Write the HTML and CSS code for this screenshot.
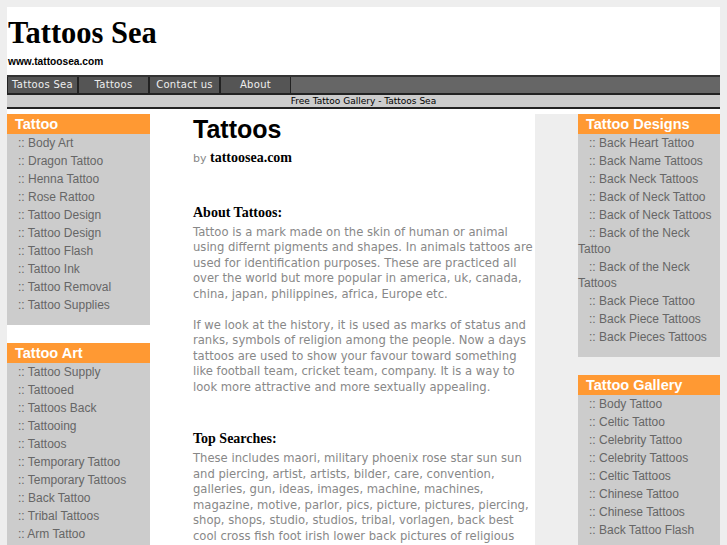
FILE: index.html
```html
<!DOCTYPE html>
<html lang="en">
<head>
    <meta charset="UTF-8">
    <title>Tattoos Sea - Free Tattoo Gallery</title>
    <link rel="stylesheet" href="styles.css">
</head>
<body>
    <div class="wrapper">
        <!-- Header -->
        <div class="header">
            <h1 class="site-title">Tattoos Sea</h1>
            <p class="site-url">www.tattoosea.com</p>
        </div>

        <!-- Navigation -->
        <ul class="nav">
            <li><a href="#">Tattoos Sea</a></li>
            <li><a href="#">Tattoos</a></li>
            <li><a href="#">Contact us</a></li>
            <li><a href="#">About</a></li>
        </ul>
        <div class="subbar">Free Tattoo Gallery - Tattoos Sea</div>

        <div class="columns">
            <!-- Left sidebar -->
            <div class="sidebar left">
                <div class="box">
                    <h2>Tattoo</h2>
                    <ul>
                        <li><a href="#">:: Body Art</a></li>
                        <li><a href="#">:: Dragon Tattoo</a></li>
                        <li><a href="#">:: Henna Tattoo</a></li>
                        <li><a href="#">:: Rose Rattoo</a></li>
                        <li><a href="#">:: Tattoo Design</a></li>
                        <li><a href="#">:: Tattoo Design</a></li>
                        <li><a href="#">:: Tattoo Flash</a></li>
                        <li><a href="#">:: Tattoo Ink</a></li>
                        <li><a href="#">:: Tattoo Removal</a></li>
                        <li><a href="#">:: Tattoo Supplies</a></li>
                    </ul>
                </div>
                <div class="box">
                    <h2>Tattoo Art</h2>
                    <ul>
                        <li><a href="#">:: Tattoo Supply</a></li>
                        <li><a href="#">:: Tattooed</a></li>
                        <li><a href="#">:: Tattoos Back</a></li>
                        <li><a href="#">:: Tattooing</a></li>
                        <li><a href="#">:: Tattoos</a></li>
                        <li><a href="#">:: Temporary Tattoo</a></li>
                        <li><a href="#">:: Temporary Tattoos</a></li>
                        <li><a href="#">:: Back Tattoo</a></li>
                        <li><a href="#">:: Tribal Tattoos</a></li>
                        <li><a href="#">:: Arm Tattoo</a></li>
                    </ul>
                </div>
            </div>

            <!-- Main content -->
            <div class="content">
                <h1>Tattoos</h1>
                <p class="byline">by <strong>tattoosea.com</strong></p>

                <h3>About Tattoos:</h3>
                <p>Tattoo is a mark made on the skin of human or animal using differnt pigments and shapes. In animals tattoos are used for identification purposes. These are practiced all over the world but more popular in america, uk, canada, china, japan, philippines, africa, Europe etc.</p>
                <p>If we look at the history, it is used as marks of status and ranks, symbols of religion among the people. Now a days tattoos are used to show your favour toward something like football team, cricket team, company. It is a way to look more attractive and more sextually appealing.</p>

                <h3>Top Searches:</h3>
                <p>These includes maori, military phoenix rose star sun sun and piercing, artist, artists, bilder, care, convention, galleries, gun, ideas, images, machine, machines, magazine, motive, parlor, pics, picture, pictures, piercing, shop, shops, studio, studios, tribal, vorlagen, back best cool cross fish foot irish lower back pictures of religious</p>
            </div>

            <!-- Right sidebar -->
            <div class="sidebar right">
                <div class="box">
                    <h2>Tattoo Designs</h2>
                    <ul>
                        <li><a href="#">:: Back Heart Tattoo</a></li>
                        <li><a href="#">:: Back Name Tattoos</a></li>
                        <li><a href="#">:: Back Neck Tattoos</a></li>
                        <li><a href="#">:: Back of Neck Tattoo</a></li>
                        <li><a href="#">:: Back of Neck Tattoos</a></li>
                        <li><a href="#">:: Back of the Neck Tattoo</a></li>
                        <li><a href="#">:: Back of the Neck Tattoos</a></li>
                        <li><a href="#">:: Back Piece Tattoo</a></li>
                        <li><a href="#">:: Back Piece Tattoos</a></li>
                        <li><a href="#">:: Back Pieces Tattoos</a></li>
                    </ul>
                </div>
                <div class="box">
                    <h2>Tattoo Gallery</h2>
                    <ul>
                        <li><a href="#">:: Body Tattoo</a></li>
                        <li><a href="#">:: Celtic Tattoo</a></li>
                        <li><a href="#">:: Celebrity Tattoo</a></li>
                        <li><a href="#">:: Celebrity Tattoos</a></li>
                        <li><a href="#">:: Celtic Tattoos</a></li>
                        <li><a href="#">:: Chinese Tattoo</a></li>
                        <li><a href="#">:: Chinese Tattoos</a></li>
                        <li><a href="#">:: Back Tattoo Flash</a></li>
                    </ul>
                </div>
            </div>
        </div>
    </div>
</body>
</html>
```

FILE: styles.css
```css
/* Global */
body {
    margin: 0;
    padding: 7px 7px 0 7px;
    background: #eeeeee;
    font-family: 'DejaVu Sans', Verdana, sans-serif;
    font-size: 11.6px;
    color: #888888;
}

a {
    text-decoration: none;
}

.wrapper {
    width: 713px;
    background: #ffffff;
}

/* Header */
.header {
    padding: 11px 0 7px 1px;
}

.site-title {
    margin: 0;
    font-family: 'Liberation Serif', 'Times New Roman', serif;
    font-size: 30.5px;
    font-weight: bold;
    line-height: 31px;
    color: #000000;
}

.site-url {
    margin: 7px 0 0;
    font-family: 'Liberation Sans', Arial, sans-serif;
    font-size: 10.2px;
    font-weight: bold;
    line-height: 12px;
    color: #000000;
}

/* Navigation */
.nav {
    list-style: none;
    margin: 0;
    padding: 0;
    display: flex;
    background: #666666;
    border-top: 2px solid #333333;
    border-bottom: 2px solid #222222;
}

.nav li {
    width: 69px;
    border-left: 1px solid #222222;
    border-right: 1px solid #222222;
    background: #555555;
    text-align: center;
}

.nav a {
    display: block;
    line-height: 16px;
    font-size: 10px;
    letter-spacing: 0.3px;
    color: #eeeeee;
}

.subbar {
    background: #cccccc;
    border-bottom: 2px solid #222222;
    text-align: center;
    font-size: 9px;
    line-height: 12px;
    color: #000000;
}

/* Three columns */
.columns {
    display: flex;
    align-items: stretch;
    margin-top: 5px;
}

.sidebar.left {
    width: 143px;
}

.sidebar.right {
    width: 142px;
    padding-left: 43px;
    background: #eeeeee;
}

.content {
    width: 342px;
    padding-left: 43px;
}

/* Sidebar boxes */
.box {
    background: #cccccc;
    padding-bottom: 11px;
    margin-bottom: 18px;
}

.box h2 {
    margin: 0;
    padding-left: 8px;
    background: #ff9933;
    font-family: 'Liberation Sans', Arial, sans-serif;
    font-size: 14.5px;
    font-weight: bold;
    line-height: 20px;
    color: #ffffff;
}

.box ul {
    list-style: none;
    margin: 0;
    padding: 0;
}

.box li {
    padding: 1px 0;
    text-indent: 11px;
    font-family: 'Liberation Sans', Arial, sans-serif;
    font-size: 12px;
    line-height: 16px;
}

.box a {
    color: #666666;
}

/* Main content */
.content h1 {
    margin: 1px 0 0;
    font-family: 'Liberation Sans', Arial, sans-serif;
    font-size: 25px;
    font-weight: bold;
    line-height: 28px;
    color: #000000;
}

.byline {
    margin: 7px 0 38px;
    font-size: 11px;
    line-height: 16px;
}

.byline strong {
    font-family: 'Liberation Serif', 'Times New Roman', serif;
    font-size: 14px;
    color: #000000;
}

.content h3 {
    margin: 36px 0 4px;
    font-family: 'Liberation Serif', 'Times New Roman', serif;
    font-size: 14px;
    font-weight: bold;
    line-height: 16px;
    color: #000000;
}

.byline + h3 {
    margin-top: 0;
}

.content p {
    line-height: 15.5px;
}

.content h3 + p {
    margin-top: 0;
}

.content p:not(.byline) {
    margin-bottom: 15.5px;
}
```
